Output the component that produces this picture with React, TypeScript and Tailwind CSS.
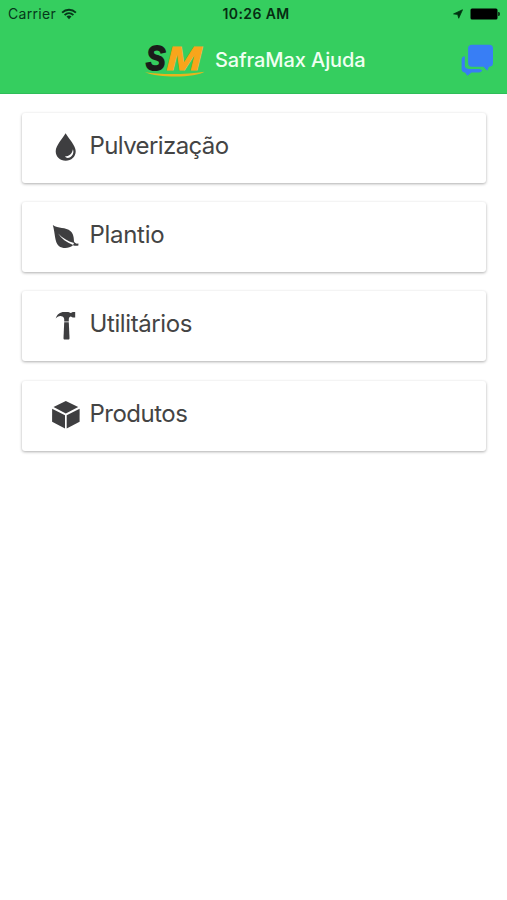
import type { ReactNode } from "react";

function DropIcon() {
  return (
    <svg viewBox="0 0 28 30" className="-mt-[2px] h-[30px] w-7" fill="currentColor">
      <path d="M13.6 1.3C10.6 6.5 3.7 13.5 3.7 19.3C3.7 24.7 8.1 28.8 13.7 28.8C19.3 28.8 23.7 24.7 23.7 19.3C23.7 13.5 16.6 6.5 13.6 1.3Z" />
      <path fill="#fff" d="M20.9 17.2C20.2 21.7 17.2 24.1 12.9 24.6C14.6 26.6 17.4 26.2 19.4 24.3C21.5 22.2 21.9 19.3 20.9 17.2Z" />
    </svg>
  );
}

function LeafIcon() {
  return (
    <svg viewBox="0 0 28 30" className="-mt-[2px] h-[30px] w-7" fill="currentColor">
      <path d="M0.8 4C6 8 13.8 5.8 18.6 10.2C21.6 13 21.9 17.1 22 20.6C23.2 22.6 24.4 22.9 26.4 22.5V24.4C24.6 25 22.7 24.8 21 24.2C17 27.6 10.8 27.9 6.8 24.9C2.5 21.3 3.2 11.8 0.8 4Z" />
      <path fill="#fff" d="M6.1 12.6C9.3 17.7 14.5 21.6 21.1 23.9L22 21.9C15.6 20.6 10.6 17 6.1 12.6Z" />
    </svg>
  );
}

function HammerIcon() {
  return (
    <svg viewBox="0 0 28 30" className="h-[30px] w-7" fill="currentColor">
      <path d="M3.7 7.5C5 3.1 8 0.9 12.1 0.9H16.3C17.3 0.9 17.8 1.9 18.8 1.9C19.7 1.9 19.9 0.9 20.8 0.9H23.2V6.5H20.8C19.9 6.5 19.7 5.5 18.8 5.5C17.7 5.5 17 6.4 16.8 8V10.6H12.2V8C11.9 6.3 11 5.4 9.4 5.2C7 4.8 5.1 5.8 3.7 7.5Z" />
      <path d="M12.2 11.2H16.8L17.5 27C17.5 28 17.1 28.5 16.2 28.5H12.8C11.9 28.5 11.5 28 11.5 27Z" />
    </svg>
  );
}

function CubeIcon() {
  return (
    <svg viewBox="0 0 28 30" className="h-[30px] w-7" fill="currentColor">
      <path d="M13.8 1L26.2 7.1L13.8 13.4L1.5 7.1Z" />
      <path d="M0.1 8.8L13 15.2V28.5L0.1 21.7Z" />
      <path d="M27.6 8.8L14.7 15.2V28.5L27.6 21.7Z" />
    </svg>
  );
}

function WifiIcon() {
  return (
    <svg viewBox="0 0 16 12" className="ml-[5px] h-3 w-4" fill="none" stroke="#06371a" strokeWidth="1.9">
      <path d="M1.1 4.6C5 0.8 11 0.8 14.9 4.6" />
      <path d="M3.6 7.1C6.2 4.6 9.8 4.6 12.4 7.1" />
      <path d="M5.5 8.5C7 7.2 9 7.2 10.5 8.5L8 11.2Z" fill="#06371a" stroke="none" />
    </svg>
  );
}

function ChatIcon() {
  return (
    <svg viewBox="0 0 32 32" className="h-8 w-8" fill="#387ef5">
      <path d="M11 0.8H28.2C30.8 0.8 32 2 32 4.3V19C32 21.4 30.9 22.5 28.6 22.7H28L26.2 26.8L22.6 22.7H11C8.4 22.7 7.1 21.4 7.1 19V4.3C7.1 2 8.4 0.8 11 0.8Z" />
      <path d="M3.8 12.2V21.6C3.8 24 5.4 24.9 7.7 24.9H18.8L21.2 26.6C20.4 27.9 19.4 28.4 18 28.4H10.6L6.4 31.8L4 28.4C1.9 28.4 0.6 27.2 0.6 24.9V15.6C0.6 13.6 1.8 12.4 3.8 12.2Z" />
    </svg>
  );
}

function Logo() {
  return (
    <svg viewBox="0 0 62 38" className="h-[38px] w-[62px] overflow-visible">
      <g fontFamily="'Liberation Sans', sans-serif" fontWeight="700" fontStyle="italic">
        <text x="2" y="28.8" fontSize="35" fill="#1b1c1a" stroke="#1b1c1a" strokeWidth="1.8" textLength="19.5" lengthAdjust="spacingAndGlyphs">S</text>
        <text x="22.4" y="28.8" fontSize="33" fill="#f9a51b" stroke="#f9a51b" strokeWidth="1" textLength="35" lengthAdjust="spacingAndGlyphs">M</text>
      </g>
      <path d="M1 31.3C16 33.8 42 33.8 60.5 30.8C53 36.6 16 37.6 1 31.3Z" fill="#e8b51d" />
    </svg>
  );
}

const items: { label: string; icon: ReactNode; tracking: string }[] = [
  { label: "Pulverização", icon: <DropIcon />, tracking: "tracking-[-0.6px]" },
  { label: "Plantio", icon: <LeafIcon />, tracking: "tracking-[-0.3px]" },
  { label: "Utilitários", icon: <HammerIcon />, tracking: "tracking-[-0.4px]" },
  { label: "Produtos", icon: <CubeIcon />, tracking: "tracking-[-0.5px]" },
];

export default function App() {
  return (
    <div className="min-h-[900px] w-[507px] bg-white font-['Inter','Liberation_Sans',sans-serif]">
      <header className="h-[94px] border-b border-[#2fbd59] bg-[#35ce5f]">
        <div className="grid h-[27px] grid-cols-3 items-center text-[14px] text-[#06371a]">
          <div className="flex items-center pl-2">
            <span className="tracking-[0.3px]">Carrier</span>
            <WifiIcon />
          </div>
          <span className="whitespace-nowrap pl-[5px] text-center font-semibold tracking-[0.4px] text-[#062d12]">10:26 AM</span>
          <div className="flex items-center justify-end pr-[7px]">
            <svg viewBox="0 0 11 11" className="mr-[7px] h-[10px] w-[10px]" fill="#031" stroke="#031" strokeWidth="0.8">
              <path d="M10.5 0.8L0.6 5.4L5.1 6L6.3 10.2Z" />
            </svg>
            <svg viewBox="0 0 30 12" className="h-3 w-[30px]">
              <rect x="0.5" y="0.5" width="27" height="11" rx="1.5" />
              <path d="M28.3 4H29C30 4.8 30 7.2 29 8H28.3Z" />
            </svg>
          </div>
        </div>
        <div className="flex h-[65px] items-center pl-[144px] pr-[14px]">
          <Logo />
          <h1 className="ml-[9px] flex-1 whitespace-nowrap text-[20px] font-medium tracking-[-0.1px] text-[#f0fff2]">SafraMax Ajuda</h1>
          <button type="button" aria-label="Chat">
            <ChatIcon />
          </button>
        </div>
      </header>
      <main className="flex flex-col gap-[19.2px] px-[21.5px] pt-[19px]">
        {items.map((item) => (
          <div
            key={item.label}
            className="flex h-[70px] items-center rounded-[3px] bg-white pb-px pl-[30px] text-[#3e3e40] shadow-[0_1px_3px_rgba(0,0,0,0.32)]"
          >
            {item.icon}
            <span className={`-mt-[3px] ml-[10px] text-[24px] leading-8 text-[#444] ${item.tracking}`}>
              {item.label}
            </span>
          </div>
        ))}
      </main>
    </div>
  );
}
